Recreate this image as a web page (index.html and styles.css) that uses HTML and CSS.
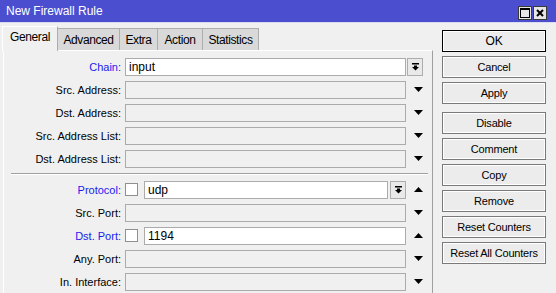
FILE: index.html
```html
<!DOCTYPE html>
<html lang="en">
<head>
    <meta charset="UTF-8">
    <title>New Firewall Rule</title>
    <link rel="stylesheet" href="styles.css">
</head>
<body>
<div class="window">
    <div class="titlebar">
        <span class="title">New Firewall Rule</span>
        <div class="title-btns">
            <span class="tbtn"><svg width="10" height="10" viewBox="0 0 10 10"><rect x="0.5" y="0.5" width="9" height="9" fill="none" stroke="#000"/><rect x="0" y="0" width="10" height="2" fill="#000"/></svg></span>
            <span class="tbtn"><svg width="8" height="8" viewBox="0 0 8 8"><path d="M1 1 L7 7 M7 1 L1 7" stroke="#000" stroke-width="2"/></svg></span>
        </div>
    </div>

    <div class="content">
        <div class="main">
            <div class="tabs">
                <div class="tab active tab-general">General</div>
                <div class="tab tab-advanced">Advanced</div>
                <div class="tab tab-extra">Extra</div>
                <div class="tab tab-action">Action</div>
                <div class="tab tab-stats">Statistics</div>
            </div>

            <div class="panel">
                <div class="row">
                    <span class="lbl blue">Chain:</span>
                    <div class="ctrl"><div class="field on">input</div></div>
                    <div class="trail left"><span class="ddbtn"><svg width="7" height="8" viewBox="0 0 7 8"><rect x="0" y="0" width="7" height="1.5" fill="#000"/><rect x="2" y="2.5" width="3" height="2" fill="#000"/><polygon points="0,4 7,4 3.5,7.5" fill="#000"/></svg></span></div>
                </div>
                <div class="row">
                    <span class="lbl">Src. Address:</span>
                    <div class="ctrl"><div class="field"></div></div>
                    <div class="trail"><svg class="arrow" width="9" height="5" viewBox="0 0 9 5"><polygon points="0,0 9,0 4.5,5" fill="#000"/></svg></div>
                </div>
                <div class="row">
                    <span class="lbl">Dst. Address:</span>
                    <div class="ctrl"><div class="field"></div></div>
                    <div class="trail"><svg class="arrow" width="9" height="5" viewBox="0 0 9 5"><polygon points="0,0 9,0 4.5,5" fill="#000"/></svg></div>
                </div>
                <div class="row">
                    <span class="lbl">Src. Address List:</span>
                    <div class="ctrl"><div class="field"></div></div>
                    <div class="trail"><svg class="arrow" width="9" height="5" viewBox="0 0 9 5"><polygon points="0,0 9,0 4.5,5" fill="#000"/></svg></div>
                </div>
                <div class="row">
                    <span class="lbl">Dst. Address List:</span>
                    <div class="ctrl"><div class="field"></div></div>
                    <div class="trail"><svg class="arrow" width="9" height="5" viewBox="0 0 9 5"><polygon points="0,0 9,0 4.5,5" fill="#000"/></svg></div>
                </div>

                <div class="sep"></div>

                <div class="row">
                    <span class="lbl blue">Protocol:</span>
                    <div class="ctrl">
                        <span class="check"></span>
                        <div class="field on">udp</div>
                        <span class="ddbtn inner"><svg width="7" height="8" viewBox="0 0 7 8"><rect x="0" y="0" width="7" height="1.5" fill="#000"/><rect x="2" y="2.5" width="3" height="2" fill="#000"/><polygon points="0,4 7,4 3.5,7.5" fill="#000"/></svg></span>
                    </div>
                    <div class="trail"><svg class="arrow" width="9" height="5" viewBox="0 0 9 5"><polygon points="0,5 9,5 4.5,0" fill="#000"/></svg></div>
                </div>
                <div class="row">
                    <span class="lbl">Src. Port:</span>
                    <div class="ctrl"><div class="field"></div></div>
                    <div class="trail"><svg class="arrow" width="9" height="5" viewBox="0 0 9 5"><polygon points="0,0 9,0 4.5,5" fill="#000"/></svg></div>
                </div>
                <div class="row">
                    <span class="lbl blue">Dst. Port:</span>
                    <div class="ctrl">
                        <span class="check"></span>
                        <div class="field on">1194</div>
                    </div>
                    <div class="trail"><svg class="arrow" width="9" height="5" viewBox="0 0 9 5"><polygon points="0,5 9,5 4.5,0" fill="#000"/></svg></div>
                </div>
                <div class="row">
                    <span class="lbl">Any. Port:</span>
                    <div class="ctrl"><div class="field"></div></div>
                    <div class="trail"><svg class="arrow" width="9" height="5" viewBox="0 0 9 5"><polygon points="0,0 9,0 4.5,5" fill="#000"/></svg></div>
                </div>
                <div class="row">
                    <span class="lbl">In. Interface:</span>
                    <div class="ctrl"><div class="field"></div></div>
                    <div class="trail"><svg class="arrow" width="9" height="5" viewBox="0 0 9 5"><polygon points="0,0 9,0 4.5,5" fill="#000"/></svg></div>
                </div>
            </div>
        </div>

        <div class="actions">
            <button class="btn default">OK</button>
            <button class="btn">Cancel</button>
            <button class="btn">Apply</button>
            <button class="btn spaced">Disable</button>
            <button class="btn">Comment</button>
            <button class="btn">Copy</button>
            <button class="btn">Remove</button>
            <button class="btn">Reset Counters</button>
            <button class="btn">Reset All Counters</button>
        </div>
    </div>
</div>
</body>
</html>
```

FILE: styles.css
```css
html, body {
    margin: 0;
    height: 100%;
    overflow: hidden;
}

body {
    background-color: #f0f0f0;
    color: #000;
    font-family: 'Liberation Sans', Arial, sans-serif;
    font-size: 11px;
}

.titlebar {
    height: 22px;
    background-color: #4b4fcf;
    color: #fff;
    font-size: 12px;
    display: flex;
    align-items: center;
    justify-content: space-between;
    padding-left: 6px;
    border-bottom: 1px solid #dcdcf0;
}

.title-btns {
    display: flex;
    gap: 1px;
    margin-right: 9px;
    margin-top: 3px;
}

.tbtn {
    width: 12px;
    height: 12px;
    background-color: #e6e6e6;
    border: 1px solid #3a3a3a;
    display: flex;
    align-items: center;
    justify-content: center;
}

.content {
    display: flex;
}

.main {
    margin-left: 3px;
    width: 430px;
}

/* tab strip */
.tabs {
    display: flex;
    align-items: flex-end;
    height: 25px;
    margin-top: 2px;
    margin-left: -1px;
}

.tab {
    height: 21px;
    line-height: 22px;
    text-align: center;
    font-size: 12px;
    letter-spacing: -0.4px;
    background-color: #d9d9d9;
    border: 1px solid #adadad;
    border-bottom: none;
    border-left: none;
}

.tab.active {
    height: 24px;
    line-height: 21px;
    background-color: #f0f0f0;
    border-left: 1px solid #fff;
    border-top-color: #fff;
    border-right-color: #adadad;
    position: relative;
    top: 1px;
}

.tab-general { width: 54px; }
.tab-advanced { width: 61px; }
.tab-extra { width: 37px; }
.tab-action { width: 44px; }
.tab-stats { width: 55px; }

.panel {
    border-top: 1px solid #fff;
    border-left: 1px solid #fff;
    border-right: 1px solid #a0a0a0;
    padding-top: 4px;
}

.row {
    display: flex;
    align-items: center;
    height: 23px;
}

.lbl {
    width: 117px;
    margin-right: 4px;
    text-align: right;
    white-space: nowrap;
}

.lbl.blue {
    color: #1a1af0;
}

.ctrl {
    width: 281px;
    display: flex;
    align-items: center;
}

.field {
    flex: 1;
    height: 16px;
    line-height: 16px;
    border: 1px solid #ababab;
    background-color: #f0f0f0;
    padding-left: 3px;
    font-size: 12px;
}

.field.on {
    background-color: #fff;
}

.check {
    width: 11px;
    height: 11px;
    border: 1px solid #8f8f8f;
    background-color: #fff;
    margin-right: 6px;
}

.ddbtn {
    width: 14px;
    height: 16px;
    border: 1px solid #adadad;
    background-color: #e9e9e9;
    display: flex;
    align-items: center;
    justify-content: center;
}

.ddbtn.inner {
    margin-left: 2px;
}

.trail {
    width: 22px;
    display: flex;
    justify-content: center;
    padding-left: 1px;
}

.trail.left {
    justify-content: flex-start;
}

.sep {
    margin: 3px 4px 3px 7px;
    border-top: 1px solid #a0a0a0;
    border-bottom: 1px solid #fff;
}

/* right button column */
.actions {
    width: 104px;
    margin-left: 9px;
    padding-top: 7px;
    display: flex;
    flex-direction: column;
    gap: 4px;
}

.btn {
    height: 22px;
    padding: 0;
    font-family: 'Liberation Sans', Arial, sans-serif;
    font-size: 11px;
    letter-spacing: -0.2px;
    color: #000;
    background-color: #ececec;
    border: 1px solid #7a7a7a;
    box-shadow: inset 0 0 0 1px #fff;
}

.btn.default {
    border-color: #000;
    font-size: 12px;
}

.btn.spaced {
    margin-top: 4px;
}
```
